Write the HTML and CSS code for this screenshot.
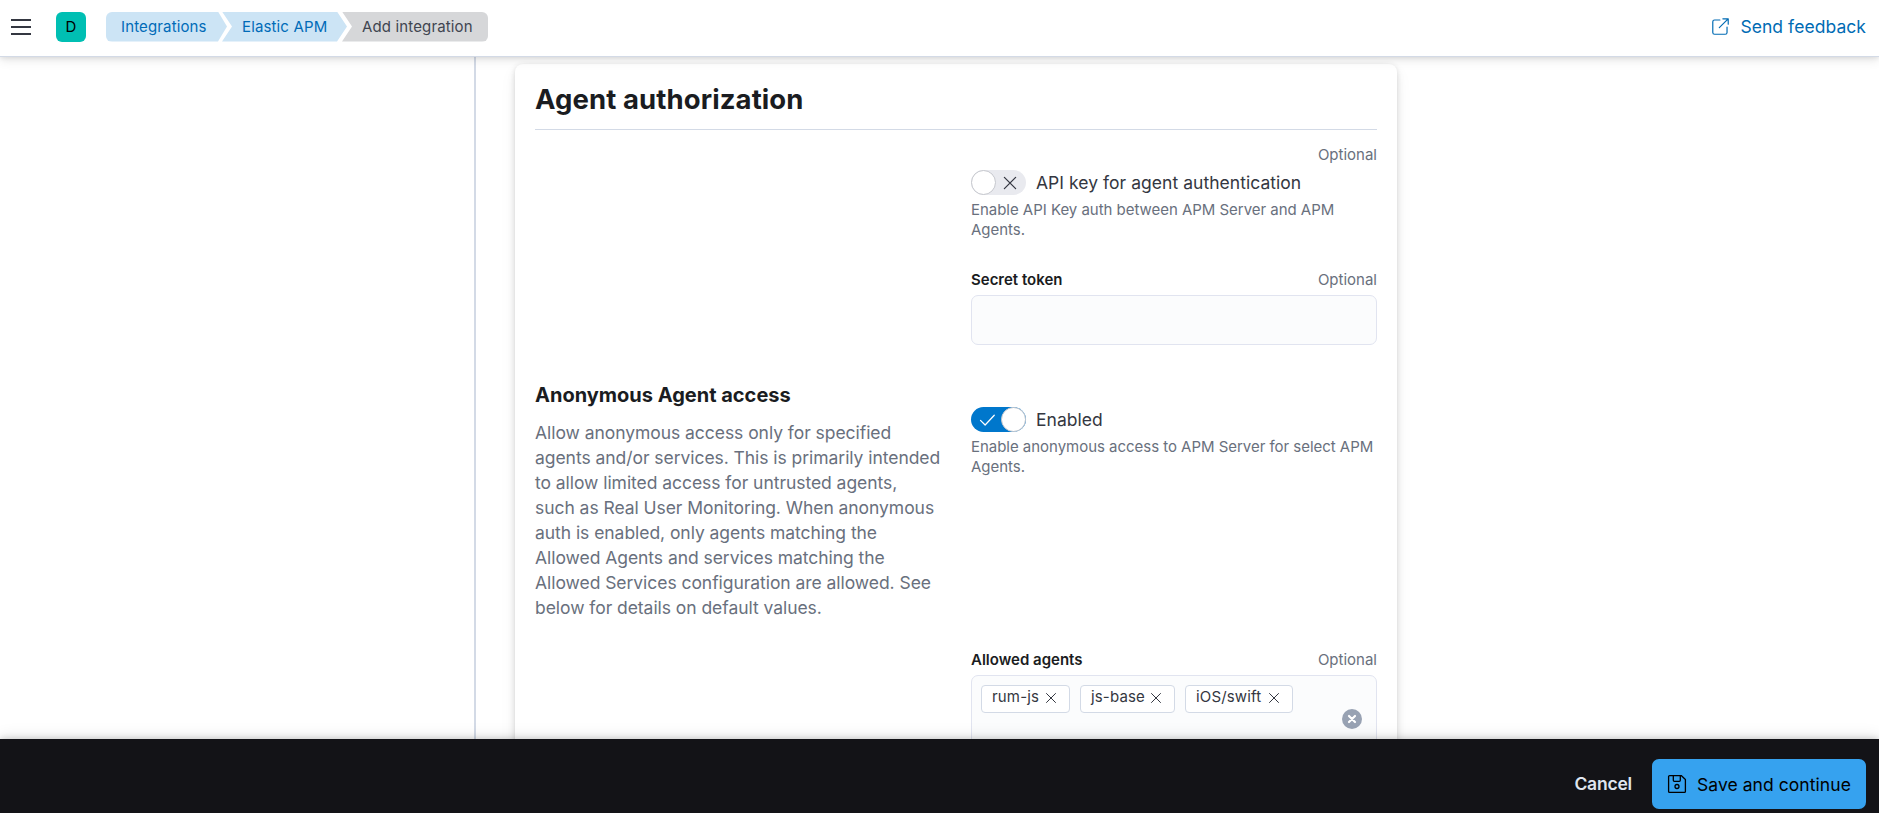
FILE: index.html
```html
<!DOCTYPE html>
<html lang="en">
<head>
<meta charset="utf-8">
<title>Add integration</title>
<link rel="stylesheet" href="styles.css">
</head>
<body>
<div class="app">
  <header class="header">
    <button class="menu" aria-label="Menu"><span></span><span></span><span></span></button>
    <div class="space">D</div>
    <nav class="crumbs">
      <a class="crumb crumb-first">Integrations</a>
      <a class="crumb crumb-mid">Elastic APM</a>
      <span class="crumb crumb-last">Add integration</span>
    </nav>
    <a class="feedback">
      <svg width="19" height="19" viewBox="0 0 16 16" fill="none" stroke="currentColor" stroke-linecap="round" stroke-linejoin="round"><path d="M7.5 2.5H3A1.5 1.5 0 0 0 1.5 4v9A1.5 1.5 0 0 0 3 14.5h9a1.5 1.5 0 0 0 1.500-1.500V8.500M10 1.500h4.500V6M14.200 1.800 7 9"/></svg>
      <span>Send feedback</span>
    </a>
  </header>
  <main class="main">
    <aside class="side"></aside>
    <section class="content">
      <div class="card">
        <h2 class="title">Agent authorization</h2>
        <div class="row">
          <div class="intro"></div>
          <div class="fields">
            <div class="labels"><span></span><span class="optional">Optional</span></div>
            <div class="switch-row">
              <span class="switch"><i class="thumb"></i><svg class="state" width="20" height="20" viewBox="0 0 16 16" fill="none" stroke="currentColor" stroke-linecap="round"><path d="M3.5 3.5l9 9M12.5 3.5l-9 9"/></svg></span>
              <span class="switch-label">API key for agent authentication</span>
            </div>
            <p class="help">Enable API Key auth between APM Server and APM Agents.</p>
            <div class="labels token"><b>Secret token</b><span class="optional">Optional</span></div>
            <div class="input"></div>
          </div>
        </div>
        <div class="row second">
          <div class="intro">
            <h3 class="subtitle">Anonymous Agent access</h3>
            <p class="desc">Allow anonymous access only for specified<br>agents and/or services. This is primarily intended<br>to allow limited access for untrusted agents,<br>such as Real User Monitoring. When anonymous<br>auth is enabled, only agents matching the<br>Allowed Agents and services matching the<br>Allowed Services configuration are allowed. See<br>below for details on default values.</p>
          </div>
          <div class="fields anon">
            <div class="switch-row">
              <span class="switch on"><svg class="state" width="20" height="20" viewBox="0 0 16 16" fill="none" stroke="currentColor" stroke-linecap="round" stroke-linejoin="round"><path d="M2 8.300 5.700 12 13 4.200"/></svg><i class="thumb"></i></span>
              <span class="switch-label">Enabled</span>
            </div>
            <p class="help">Enable anonymous access to APM Server for select APM Agents.</p>
          </div>
        </div>
        <div class="row third">
          <div class="intro"></div>
          <div class="fields">
            <div class="labels"><b>Allowed agents</b><span class="optional">Optional</span></div>
            <div class="combo">
              <div class="pills">
                <span class="pill pill-a">rum-js <svg width="12" height="12" viewBox="0 0 12 12" stroke="currentColor" stroke-linecap="round"><path d="M1.5 1.5l9 9M10.5 1.5l-9 9"/></svg></span>
                <span class="pill pill-b">js-base <svg width="12" height="12" viewBox="0 0 12 12" stroke="currentColor" stroke-linecap="round"><path d="M1.5 1.5l9 9M10.5 1.5l-9 9"/></svg></span>
                <span class="pill pill-c">iOS/swift <svg width="12" height="12" viewBox="0 0 12 12" stroke="currentColor" stroke-linecap="round"><path d="M1.5 1.5l9 9M10.5 1.5l-9 9"/></svg></span>
              </div>
              <svg class="clear" width="20" height="20" viewBox="0 0 20 20"><circle cx="10" cy="10" r="10" fill="#98a2b3"/><path d="M7 7l6 6M13 7l-6 6" stroke="#fff" stroke-width="2.2" stroke-linecap="round"/></svg>
            </div>
          </div>
        </div>
      </div>
    </section>
  </main>
  <footer class="footer">
    <button class="cancel">Cancel</button>
    <button class="save">
      <svg width="20" height="20" viewBox="0 0 20 20" fill="none" stroke="currentColor" stroke-width="1.3" stroke-linejoin="round"><path d="M2.6 1.6h11.6l4.200 3.800v12a1 1 0 0 1-1 1H2.600a1 1 0 0 1-1-1V2.600a1 1 0 0 1 1-1z"/><path d="M6.300 1.600v4.700a1 1 0 0 0 1 1h5a1 1 0 0 0 1-1V1.600"/><circle cx="10" cy="12.500" r="2"/></svg>
      <span>Save and continue</span>
    </button>
  </footer>
</div>
</body>
</html>
```
FILE: styles.css
```css
* { box-sizing: border-box; }
body { margin: 0; font: 400 17.5px/25px Inter, sans-serif; color: #343741; background: #fff; overflow: hidden; }
h2, h3, p { margin: 0; }
button { font: inherit; border: 0; background: none; padding: 0; }
svg { flex: none; display: block; }
.app { height: 813px; display: flex; flex-direction: column; }

.header { position: relative; z-index: 2; flex: none; height: 57px; padding: 0 13px 3px 11px; display: flex; align-items: center; background: #fff; border-bottom: 1px solid #d3dae6; box-shadow: 0 1px 5px rgba(0,0,0,.1), 0 4px 10px rgba(0,0,0,.08); }
.menu { width: 20px; height: 16px; display: flex; flex-direction: column; justify-content: space-between; }
.menu span { height: 2px; width: 20px; background: #343741; }
.space { margin-left: 25px; width: 30px; height: 30px; border-radius: 6px; background: #00bfb3; color: #000; font-size: 15px; line-height: 30px; text-align: center; }
.crumbs { display: flex; margin-left: 20px; font-size: 15px; line-height: 29px; letter-spacing: .14px; }
.crumb { height: 30px; padding-left: 15px; background: #cce4f5; color: #006bb8; white-space: nowrap; }
.crumb-first { width: 121px; border-radius: 6px 0 0 6px; clip-path: polygon(0 0, 112px 0, 100% 50%, 112px 100%, 0 100%); }
.crumb-mid { width: 129px; margin-left: -5px; padding-left: 20px; clip-path: polygon(0 0, 115px 0, 125px 50%, 115px 100%, 0 100%, 10px 50%); }
.crumb-last { width: 146px; margin-left: -9px; padding-left: 20px; background: #d6d7d9; color: #404550; border-radius: 0 6px 6px 0; clip-path: polygon(0 0, 100% 0, 100% 100%, 0 100%, 10px 50%); }
.feedback { margin-left: auto; display: flex; align-items: center; gap: 10px; color: #006bb4; letter-spacing: .06px; }

.main { flex: 1; min-height: 0; display: flex; overflow: hidden; }
.side { width: 476px; border-right: 2px solid #d3dae6; }
.content { padding: 7px 0 0 39px; }
.card { width: 882px; height: 900px; padding: 20px; border-radius: 8px; background: #fff; box-shadow: 0 1px 5px rgba(0,0,0,.1), 0 4px 10px rgba(0,0,0,.07), 0 7px 18px rgba(0,0,0,.05); }
.title { height: 46px; border-bottom: 1px solid #d3dae6; font-size: 27.5px; line-height: 30px; font-weight: 700; color: #1a1c21; letter-spacing: .1px; }
.row { display: grid; grid-template-columns: 406px 406px; gap: 30px; padding-top: 15px; }
.labels { display: flex; justify-content: space-between; font-size: 15px; line-height: 20px; margin-bottom: 5px; color: #1a1c21; }
.labels b { font-weight: 600; }
.optional { color: #69707d; }
.switch-row { display: flex; align-items: center; gap: 10px; height: 25px; }
.switch-label { letter-spacing: .04px; }
.switch { width: 55px; height: 25px; border-radius: 13px; background: #e9eaef; display: flex; align-items: center; justify-content: space-between; padding-right: 6px; color: #343741; }
.switch.on { padding: 0 0 0 7px; background: #0077cc; color: #fff; }
.thumb { width: 25px; height: 25px; border-radius: 50%; border: 1px solid #c5c7cd; background: #fff; }
.help { margin-top: 5px; font-size: 15px; line-height: 20px; color: #69707d; letter-spacing: -.03px; }
.token { margin-top: 30px; }
.input { height: 50px; border: 1px solid #e1e4f0; border-radius: 7px; background: #fbfcfd; }
.second { padding-top: 38px; }
.subtitle { font-size: 20px; line-height: 25px; font-weight: 700; color: #1a1c21; }
.desc { margin-top: 12px; color: #69707d; letter-spacing: -.05px; white-space: nowrap; }
.anon { padding-top: 24px; }
.third { padding-top: 30px; }
.combo { height: 88px; border: 1px solid #e1e4f0; border-radius: 7px; background: #fbfcfd; padding: 9px 14px 9px 9px; display: flex; align-items: center; justify-content: space-between; }
.pills { align-self: flex-start; display: flex; gap: 10px; }
.pill { height: 28px; border: 1px solid #d3dae6; border-radius: 4px; background: #fff; padding: 0 12px 5px 10px; display: flex; align-items: center; justify-content: space-between; font-size: 15px; line-height: 20px; letter-spacing: .16px; }
.pill svg { margin-top: 2px; }
.pill-a { width: 89px; }
.pill-b { width: 95px; }
.pill-c { width: 108px; }

.footer { position: relative; z-index: 2; flex: none; height: 74px; padding: 16px 13px 0 0; display: flex; justify-content: flex-end; align-items: center; gap: 20px; background: #131317; box-shadow: 0 -1px 6px rgba(0,0,0,.16), 0 -4px 14px rgba(0,0,0,.07); }
.cancel { color: #dfe5ef; font-weight: 600; letter-spacing: -.2px; margin-bottom: 2px; }
.save { width: 214px; height: 50px; padding-left: 15px; border-radius: 7px; background: #36a2ef; color: #000; display: flex; align-items: center; gap: 10px; white-space: nowrap; letter-spacing: .06px; }
```
